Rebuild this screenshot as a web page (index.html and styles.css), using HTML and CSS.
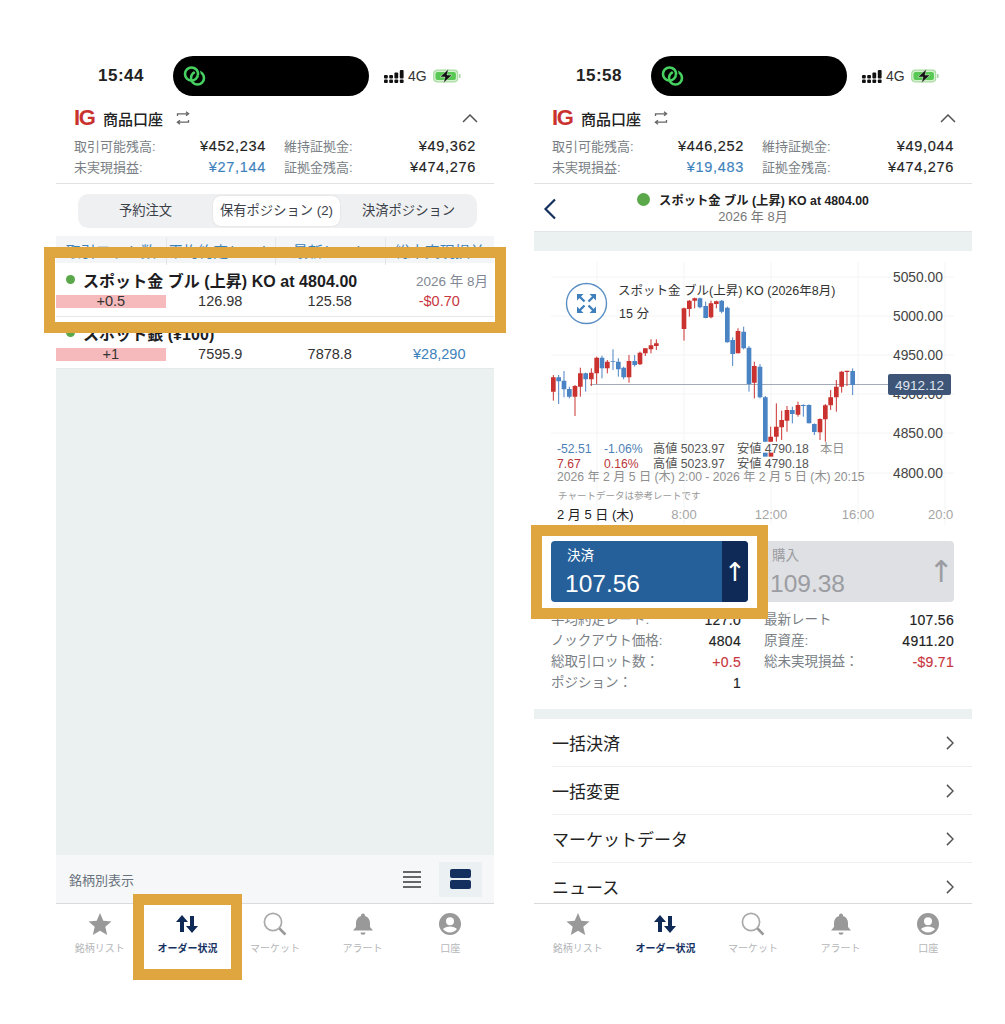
FILE: index.html
```html
<!DOCTYPE html>
<html lang="ja">
<head>
    <meta charset="UTF-8">
    <title>IG 商品口座</title>
    <link rel="stylesheet" href="styles.css">
</head>
<body>
    <!-- shared icons -->
    <svg class="defs">
        <symbol id="i-link" viewBox="0 0 26 20"><g fill="none" stroke="#46d160" stroke-width="2.600"><circle cx="9.500" cy="8" r="6.500"/><circle cx="15.500" cy="12" r="6.500"/><path d="M13.200 2.700A6.500 6.500 0 0 1 15.900 9.100" stroke="#000" stroke-width="5"/><path d="M12.800 2.400A6.500 6.500 0 0 1 15.900 9.100"/></g></symbol>
        <symbol id="i-signal" viewBox="0 0 20 13"><g fill="#111"><rect x="0" y="5" width="3.800" height="3.400" rx="1"/><rect x="0" y="9.600" width="3.800" height="3.400" rx="1"/><rect x="5.200" y="5" width="3.800" height="3.400" rx="1"/><rect x="5.200" y="9.600" width="3.800" height="3.400" rx="1"/><rect x="10.400" y="2.500" width="3.800" height="5.900" rx="1"/><rect x="10.400" y="9.600" width="3.800" height="3.400" rx="1"/><rect x="15.800" y="0" width="3.800" height="8.400" rx="1"/><rect x="15.800" y="9.600" width="3.800" height="3.400" rx="1"/></g></symbol>
        <symbol id="i-battery" viewBox="0 0 28 14"><rect x="0.700" y="1.200" width="24" height="11.600" rx="3.500" fill="#d5f0cf" stroke="#a7dca0" stroke-width="1.200"/><rect x="2.500" y="3" width="20.400" height="8" rx="2" fill="#58c754"/><rect x="26" y="5" width="1.600" height="4" rx="0.800" fill="#a9cfa5"/><path d="M15.500 0 7 8h5l-1.500 6L19 6h-5z" fill="#111" stroke="#e9f7e6" stroke-width="0.500"/></symbol>
        <symbol id="i-swap" viewBox="0 0 14 14"><g fill="none" stroke="#666" stroke-width="1.300"><path d="M1.500 5V2.800h11M10 .8l2.600 2-2.600 2"/><path d="M12.500 9v2.200h-11M4 13.200l-2.600-2 2.600-2"/></g></symbol>
        <symbol id="i-up" viewBox="0 0 16 9"><path d="M1 8l7-7 7 7" fill="none" stroke="#555" stroke-width="1.500"/></symbol>
        <symbol id="i-right" viewBox="0 0 9 16"><path d="M1 1l7 7-7 7" fill="none" stroke="#555" stroke-width="1.700"/></symbol>
        <symbol id="i-star" viewBox="0 0 24 24"><path d="M12 1l3.300 7.700 8.200.7-6.200 5.400 1.900 8.200L12 18.700 4.800 23l1.900-8.200L.5 9.400l8.200-.7z" fill="#999"/></symbol>
        <symbol id="i-orders" viewBox="0 0 24 24"><path d="M7 3l6 7H9v10H5V10H1zM15 4h4v10h4l-6 7-6-7h4z" fill="#0f2a57"/></symbol>
        <symbol id="i-search" viewBox="0 0 24 24"><circle cx="10" cy="10" r="8.600" fill="none" stroke="#aaa" stroke-width="1.700"/><path d="M16.400 16.400l6 6.200" stroke="#999" stroke-width="2.800"/></symbol>
        <symbol id="i-bell" viewBox="0 0 24 24"><path d="M12 1.500a2 2 0 0 1 2 2v.6c3.400 1 5 3.700 5 7v4l3 3.400H2l3-3.400v-4c0-3.300 1.600-6 5-7v-.6a2 2 0 0 1 2-2z" fill="#999"/><path d="M9.500 20.500h5a2.500 2.200 0 0 1-5 0z" fill="#999"/></symbol>
        <symbol id="i-user" viewBox="0 0 24 24"><path d="M12 1a11 11 0 1 0 0 22 11 11 0 0 0 0-22zm0 4.200a4 4 0 1 1 0 8 4 4 0 0 1 0-8zM12 20.500a8.800 8.800 0 0 1-7-3.500c1.500-1.800 4.200-2.600 7-2.600s5.500.8 7 2.600a8.800 8.800 0 0 1-7 3.500z" fill="#999"/></symbol>
    </svg>

    <div class="screens">
        <!-- left phone: positions list -->
        <section class="phone">
            <header class="status">
                <span class="clock">15:44</span>
                <div class="island"><svg class="island-icon"><use href="#i-link"/></svg></div>
                <div class="status-right">
                    <svg class="signal"><use href="#i-signal"/></svg>
                    <span class="net">4G</span>
                    <svg class="battery"><use href="#i-battery"/></svg>
                </div>
            </header>

            <div class="account">
                <div class="account-head">
                    <span class="logo">IG</span>
                    <span class="account-name">商品口座</span>
                    <svg class="swap"><use href="#i-swap"/></svg>
                    <svg class="collapse"><use href="#i-up"/></svg>
                </div>
                <div class="stats">
                    <div class="stat"><span>取引可能残高:</span><b>¥452,234</b></div>
                    <div class="stat"><span>維持証拠金:</span><b>¥49,362</b></div>
                    <div class="stat"><span>未実現損益:</span><b class="blue">¥27,144</b></div>
                    <div class="stat"><span>証拠金残高:</span><b>¥474,276</b></div>
                </div>
            </div>

            <main class="content">
                <div class="tabs">
                    <div class="tab">予約注文</div>
                    <div class="tab active">保有ポジション (2)</div>
                    <div class="tab">決済ポジション</div>
                </div>
                <div class="table-head">
                    <div>取引ロット数</div>
                    <div>平均約定レート</div>
                    <div>最新レート</div>
                    <div>総未実現損益</div>
                </div>
                <div class="pos first">
                    <div class="pos-title">
                        <i class="dot"></i>
                        <span class="pos-name">スポット金 ブル (上昇) KO at 4804.00</span>
                        <span class="pos-date">2026 年 8月</span>
                    </div>
                    <div class="pos-cells">
                        <div class="lot">+0.5</div>
                        <div>126.98</div>
                        <div>125.58</div>
                        <div class="red">-$0.70</div>
                    </div>
                </div>
                <div class="pos second">
                    <div class="pos-title">
                        <i class="dot"></i>
                        <span class="pos-name">スポット銀 (¥100)</span>
                    </div>
                    <div class="pos-cells">
                        <div class="lot">+1</div>
                        <div>7595.9</div>
                        <div>7878.8</div>
                        <div class="blue">¥28,290</div>
                    </div>
                </div>
                <div class="empty"></div>
                <div class="view-bar">
                    <span class="view-label">銘柄別表示</span>
                    <div class="view-list"><i></i><i></i><i></i><i></i></div>
                    <div class="view-card"><i></i><i></i></div>
                </div>
            </main>

            <nav class="tabbar">
                <div class="nav-item"><svg><use href="#i-star"/></svg><span>銘柄リスト</span></div>
                <div class="nav-item current"><svg><use href="#i-orders"/></svg><span>オーダー状況</span></div>
                <div class="nav-item"><svg><use href="#i-search"/></svg><span>マーケット</span></div>
                <div class="nav-item"><svg><use href="#i-bell"/></svg><span>アラート</span></div>
                <div class="nav-item"><svg><use href="#i-user"/></svg><span>口座</span></div>
            </nav>

            <div class="mark mark-row"></div>
            <div class="mark mark-tab"></div>
        </section>

        <!-- right phone: position detail -->
        <section class="phone">
            <header class="status">
                <span class="clock">15:58</span>
                <div class="island"><svg class="island-icon"><use href="#i-link"/></svg></div>
                <div class="status-right">
                    <svg class="signal"><use href="#i-signal"/></svg>
                    <span class="net">4G</span>
                    <svg class="battery"><use href="#i-battery"/></svg>
                </div>
            </header>

            <div class="account">
                <div class="account-head">
                    <span class="logo">IG</span>
                    <span class="account-name">商品口座</span>
                    <svg class="swap"><use href="#i-swap"/></svg>
                    <svg class="collapse"><use href="#i-up"/></svg>
                </div>
                <div class="stats">
                    <div class="stat"><span>取引可能残高:</span><b>¥446,252</b></div>
                    <div class="stat"><span>維持証拠金:</span><b>¥49,044</b></div>
                    <div class="stat"><span>未実現損益:</span><b class="blue">¥19,483</b></div>
                    <div class="stat"><span>証拠金残高:</span><b>¥474,276</b></div>
                </div>
            </div>

            <main class="content">
                <div class="detail-head">
                    <svg class="back" viewBox="0 0 14 22"><path d="M12 1.500 2.500 11l9.500 9.500" fill="none" stroke="#14305f" stroke-width="2.200"/></svg>
                    <div class="detail-title"><i class="dot big"></i><b>スポット金 ブル (上昇) KO at 4804.00</b></div>
                    <div class="detail-date">2026 年 8月</div>
                </div>
                <div class="strip"></div>

                <svg class="chart" viewBox="534 251 438 274">
                    <g class="grid">
                        <path d="M551 277H954M551 316H954M551 355H954M551 394H954M551 433H954M551 473H954"/>
                        <path d="M597 262V525M684 262V525M771 262V525M858 262V525M945 262V525"/>
                    </g>
                    <path class="price-line" d="M590 384.500H888"/>
                    <g transform="translate(545 260) scale(.33333)">
                        <path class="wick up" d="M25 345V422M90 375V468M106 323V410M139 325V378M155 290V372M187 300V340M252 285V368M285 275V315M301 265V288M318 238V280M334 238V270M417 143V242M433 120V170M449 113V145M498 122V175M514 122V145M579 205V280M628 305V415M677 500V545M694 430V545M710 452V540M726 438V515M759 425V470M825 475V540M841 432V545M857 390V450M874 360V455M890 333V398M906 333V378"/>
                        <path class="wick down" d="M41 345V432M57 333V412M73 380V415M122 338V395M171 287V355M204 268V330M220 295V350M236 320V358M269 285V320M465 113V145M482 125V175M530 120V160M547 140V248M563 232V318M596 200V268M612 258V395M645 312V415M661 408V545M742 440V490M775 433V470M792 433V490M808 490V525M923 325V405"/>
                        <path class="body up" d="M25 352V395M90 378V410M106 340V380M139 338V358M155 293V340M187 305V325M252 303V352M285 278V313M301 265V280M318 256V268M334 250V258M417 145V207M433 122V147M449 115V122M498 130V172M514 124V132M579 213V280M628 318V368M677 530V545M694 500V530M710 480V502M726 450V482M759 435V464M825 477V517M841 436V478M857 412V436M874 380V412M890 335V380M906 332V336"/>
                        <path class="body down" d="M41 352V364M57 362V388M73 387V410M122 340V358M171 293V325M204 303V305M220 305V328M236 323V352M269 303V315M465 115V142M482 138V174M530 122V155M547 143V247M563 240V282M596 215V265M612 263V372M645 320V412M661 412V545M742 450V462M775 435V438M792 435V490M808 492V516M923 333V375"/>
                        <path class="body up" d="M678 578V590"/>
                        <path class="body down" d="M661 578V590"/>
                    </g>

                    <circle class="expand-ring" cx="586.500" cy="303.500" r="20"/>
                    <path class="expand-heads" d="M577 294h6.500L577 300.500zM596 294h-6.500L596 300.500zM577 313h6.500L577 306.500zM596 313h-6.500L596 306.500z"/>
                    <path class="expand-tails" d="M579 296l5.500 5.500M594 296l-5.500 5.500M579 311l5.500-5.500M594 311l-5.500-5.500"/>
                    <text class="t-title" x="618" y="294.500">スポット金 ブル(上昇) KO (2026年8月)</text>
                    <text class="t-title" x="619" y="318">15 分</text>

                    <g class="t-axis">
                        <text x="893" y="282">5050.00</text>
                        <text x="893" y="321">5000.00</text>
                        <text x="893" y="360">4950.00</text>
                        <text x="893" y="399">4900.00</text>
                        <text x="893" y="438">4850.00</text>
                        <text x="893" y="478">4800.00</text>
                    </g>
                    <rect class="tag" x="888" y="374" width="63" height="21" rx="2"/>
                    <text class="t-tag" x="919.500" y="390" text-anchor="middle">4912.12</text>

                    <g class="t-info">
                        <text class="c-blue" x="557" y="453">-52.51</text>
                        <text class="c-blue" x="604" y="453">-1.06%</text>
                        <text x="653" y="453">高値 5023.97</text>
                        <text x="737" y="453">安値 4790.18</text>
                        <text class="c-soft" x="820" y="453">本日</text>
                        <text class="c-red" x="557" y="468">7.67</text>
                        <text class="c-red" x="604" y="468">0.16%</text>
                        <text x="653" y="468">高値 5023.97</text>
                        <text x="737" y="468">安値 4790.18</text>
                        <text class="c-soft" x="557" y="481">2026 年 2 月 5 日 (木) 2:00 - 2026 年 2 月 5 日 (木) 20:15</text>
                    </g>
                    <text class="t-note" x="558" y="499">チャートデータは参考レートです</text>
                    <text class="t-day" x="557" y="519">2 月 5 日 (木)</text>
                    <g class="t-time" text-anchor="middle">
                        <text x="684" y="519">8:00</text>
                        <text x="771" y="519">12:00</text>
                        <text x="858" y="519">16:00</text>
                    </g>
                    <text class="t-time" x="928" y="519">20:0</text>
                </svg>

                <div class="deal">
                    <div class="deal-btn sell">
                        <div class="deal-main"><span>決済</span><b>107.56</b></div>
                        <div class="deal-side">↑</div>
                    </div>
                    <div class="deal-btn buy">
                        <div class="deal-main"><span>購入</span><b>109.38</b></div>
                        <div class="deal-side">↑</div>
                    </div>
                </div>

                <div class="info">
                    <div class="stat"><span>平均約定レート:</span><b>127.0</b></div>
                    <div class="stat"><span>最新レート</span><b>107.56</b></div>
                    <div class="stat"><span>ノックアウト価格:</span><b>4804</b></div>
                    <div class="stat"><span>原資産:</span><b>4911.20</b></div>
                    <div class="stat"><span>総取引ロット数：</span><b class="red">+0.5</b></div>
                    <div class="stat"><span>総未実現損益：</span><b class="red">-$9.71</b></div>
                    <div class="stat"><span>ポジション：</span><b>1</b></div>
                </div>

                <div class="strip thin"></div>

                <ul class="menu">
                    <li>一括決済<svg><use href="#i-right"/></svg></li>
                    <li>一括変更<svg><use href="#i-right"/></svg></li>
                    <li>マーケットデータ<svg><use href="#i-right"/></svg></li>
                    <li>ニュース<svg><use href="#i-right"/></svg></li>
                </ul>
            </main>

            <nav class="tabbar">
                <div class="nav-item"><svg><use href="#i-star"/></svg><span>銘柄リスト</span></div>
                <div class="nav-item current"><svg><use href="#i-orders"/></svg><span>オーダー状況</span></div>
                <div class="nav-item"><svg><use href="#i-search"/></svg><span>マーケット</span></div>
                <div class="nav-item"><svg><use href="#i-bell"/></svg><span>アラート</span></div>
                <div class="nav-item"><svg><use href="#i-user"/></svg><span>口座</span></div>
            </nav>

            <div class="mark mark-deal"></div>
        </section>
    </div>
</body>
</html>
```

FILE: styles.css
```css
* {
    margin: 0;
    padding: 0;
    box-sizing: border-box;
}

body {
    background: #fff;
    color: #1d1d1f;
    font-family: "Liberation Sans", "Noto Sans CJK JP", sans-serif;
}

.defs {
    display: none;
}

.screens {
    display: flex;
    gap: 40px;
    min-height: 1024px;
    padding: 56px 0 0 56px;
}

.phone {
    position: relative;
    display: flex;
    flex-direction: column;
    width: 438px;
    height: 904px;
}

/* status bar */
.status {
    display: flex;
    align-items: center;
    height: 40px;
    flex: none;
}

.clock {
    width: 117px;
    padding-left: 42px;
    font-size: 17px;
    font-weight: 700;
    letter-spacing: 0.5px;
    color: #222;
}

.island {
    display: flex;
    align-items: center;
    width: 196px;
    height: 40px;
    padding-left: 9px;
    background: #000;
    border-radius: 20px;
}

.island-icon {
    width: 26px;
    height: 20px;
}

.status-right {
    display: flex;
    align-items: center;
    margin-left: 15px;
}

.signal {
    width: 20px;
    height: 13px;
}

.net {
    margin: 0 6px 0 4px;
    font-size: 14px;
    color: #333;
}

.battery {
    width: 28px;
    height: 14px;
}

/* account summary */
.account {
    flex: none;
    height: 88px;
    padding-top: 10px;
    border-bottom: 1px solid #dfe1e3;
}

.account-head {
    display: flex;
    align-items: center;
    height: 24px;
    padding: 0 16px 0 18px;
}

.logo {
    width: 29px;
    font-size: 22px;
    font-weight: 700;
    letter-spacing: -1.4px;
    color: #c9322f;
}

.account-name {
    font-size: 15px;
    font-weight: 500;
    color: #222;
}

.swap {
    width: 14px;
    height: 14px;
    margin-left: 13px;
}

.collapse {
    width: 16px;
    height: 9px;
    margin-left: auto;
}

.stats {
    display: grid;
    grid-template-columns: 192px 192px;
    grid-auto-rows: 21px;
    column-gap: 18px;
    padding: 6px 18px 0;
}

.stat {
    display: flex;
    justify-content: space-between;
    align-items: center;
    height: 21px;
    font-size: 13px;
    line-height: 1;
    color: #7a7f86;
}

.stat b {
    font-size: 14.5px;
    font-weight: 400;
    letter-spacing: 0.7px;
    color: #222;
    -webkit-text-stroke: 0.15px currentColor;
}

.blue,
.stat b.blue {
    color: #3e82bd;
}

.red,
.stat b.red {
    color: #c9363f;
}

/* content area */
.content {
    flex: 1;
    display: flex;
    flex-direction: column;
    min-height: 0;
    overflow: hidden;
}

.tabs {
    display: grid;
    grid-template-columns: 135px 127px 137px;
    align-items: center;
    flex: none;
    width: 399px;
    height: 34px;
    margin: 10px 0 8px 22px;
    padding: 2px 0;
    background: #eef0f2;
    border-radius: 10px;
}

.tab {
    font-size: 13.3px;
    line-height: 30px;
    text-align: center;
    color: #3c4048;
}

.tab.active {
    height: 30px;
    background: #fff;
    border-radius: 8px;
    box-shadow: 0 0 2px rgba(0, 0, 0, 0.12);
}

.table-head {
    display: grid;
    grid-template-columns: repeat(4, 1fr);
    flex: none;
    height: 27px;
    padding-top: 2px;
    background: #f3f5f6;
    font-size: 15px;
    line-height: 27px;
    text-align: center;
    color: #3e82bd;
}

.table-head div + div {
    border-left: 1px solid #e3e6e8;
}

.pos {
    flex: none;
    border-bottom: 1px solid #e6e9eb;
}

.pos.first {
    height: 54px;
    padding-top: 4px;
}

.pos.second {
    height: 52px;
}

.pos-title {
    display: flex;
    align-items: center;
    height: 25px;
    padding: 0 6px 0 10px;
}

.pos.second .pos-title {
    height: 31px;
}

.dot {
    flex: none;
    width: 9px;
    height: 9px;
    background: #5aa84a;
    border-radius: 50%;
}

.pos-name {
    margin-left: 8px;
    font-size: 16px;
    font-weight: 700;
    letter-spacing: 0.05px;
    color: #1d1d1f;
}

.pos-date {
    margin-left: auto;
    font-size: 13.5px;
    color: #7f8894;
}

.pos-cells {
    display: grid;
    grid-template-columns: repeat(4, 1fr);
    font-size: 14.5px;
    line-height: 13px;
    text-align: center;
    color: #333;
}

.pos.first .pos-cells {
    margin-top: 3px;
}

.lot {
    background: #f6babc;
}

.empty {
    flex: 1;
    background: #ebf0f0;
}

.view-bar {
    display: flex;
    align-items: center;
    flex: none;
    height: 48px;
    padding: 0 12px 0 13px;
    background: #f5f7f8;
}

.view-label {
    font-size: 13px;
    color: #68717c;
}

.view-list {
    display: flex;
    flex-direction: column;
    gap: 3px;
    width: 18px;
    margin-left: auto;
}

.view-list i {
    height: 2px;
    background: #666;
}

.view-card {
    display: flex;
    flex-direction: column;
    justify-content: center;
    gap: 2px;
    width: 43px;
    height: 35px;
    margin-left: 18px;
    padding: 0 11px;
    background: #ebf0f2;
}

.view-card i {
    height: 9px;
    background: #14305f;
    border-radius: 2px;
}

/* bottom tabs */
.tabbar {
    display: grid;
    grid-template-columns: repeat(5, 1fr);
    flex: none;
    height: 57px;
    padding-top: 8px;
    background: #fff;
    border-top: 1px solid #d8dadc;
}

.nav-item {
    display: flex;
    flex-direction: column;
    align-items: center;
    font-size: 10px;
    color: #b4b6b9;
}

.nav-item svg {
    width: 24px;
    height: 24px;
    margin-bottom: 4px;
}

.nav-item.current {
    font-weight: 700;
    color: #14305f;
}

/* detail screen */
.detail-head {
    position: relative;
    flex: none;
    height: 48px;
    padding-top: 7px;
    border-bottom: 1px solid #e3e6e8;
    text-align: center;
}

.back {
    position: absolute;
    left: 9px;
    top: 14px;
    width: 14px;
    height: 22px;
}

.detail-title {
    display: flex;
    justify-content: center;
    align-items: center;
    gap: 9px;
    height: 17px;
    font-size: 12.3px;
    color: #222;
}

.detail-title b {
    font-weight: 700;
}

.dot.big {
    width: 13px;
    height: 13px;
}

.detail-date {
    padding-top: 1px;
    font-size: 13px;
    line-height: 16px;
    color: #777;
}

.strip {
    flex: none;
    height: 19px;
    background: #ebf0f0;
}

.strip.thin {
    height: 10px;
}

.chart {
    display: block;
    flex: none;
    width: 438px;
    height: 274px;
}

.grid path {
    fill: none;
    stroke: #f3f4f5;
    stroke-width: 1;
}

.price-line {
    stroke: #a3abb8;
    stroke-width: 1;
}

.wick {
    fill: none;
    stroke-width: 3;
}

.body {
    fill: none;
    stroke-width: 14;
}

.up {
    stroke: #c9322f;
}

.down {
    stroke: #4a84c4;
}

.expand-ring {
    fill: #fff;
    stroke: #5a8fc4;
    stroke-width: 1.4;
}

.expand-heads {
    fill: #3f7fbb;
}

.expand-tails {
    fill: none;
    stroke: #3f7fbb;
    stroke-width: 2.4;
}

.chart text {
    font-family: "Liberation Sans", "Noto Sans CJK JP", sans-serif;
}

.t-title {
    font-size: 12.5px;
    fill: #333;
}

.t-axis text {
    font-size: 13.8px;
    fill: #444;
}

.tag {
    fill: #3f5578;
}

.t-tag {
    font-size: 13.5px;
    fill: #dfe5ee;
}

.t-info text {
    font-size: 12.2px;
    fill: #555;
}

.t-info .c-blue {
    fill: #4e7fb5;
}

.t-info .c-red {
    fill: #b9373a;
}

.t-info .c-soft {
    fill: #909090;
}

.t-note {
    font-size: 9.5px;
    fill: #999;
}

.t-day {
    font-size: 13px;
    fill: #222;
}

.t-time,
.t-time text {
    font-size: 13px;
    fill: #a5a5a5;
}

.deal {
    display: flex;
    justify-content: space-between;
    flex: none;
    height: 61px;
    margin: 16px 18px 0 17px;
}

.deal-btn {
    display: flex;
    height: 61px;
    border-radius: 4px;
    overflow: hidden;
}

.sell {
    width: 197px;
    background: #26609a;
    color: #fff;
}

.buy {
    width: 189px;
    background: #dfe0e3;
    color: #9b9da2;
}

.deal-main {
    flex: 1;
    display: flex;
    flex-direction: column;
    padding: 6px 0 0 14px;
}

.buy .deal-main {
    padding-left: 5px;
}

.deal-main span {
    padding-left: 2px;
    font-size: 13.5px;
    line-height: 18px;
}

.deal-main b {
    font-size: 24.5px;
    font-weight: 400;
    line-height: 38px;
}

.deal-side {
    display: flex;
    justify-content: center;
    align-items: center;
    width: 26px;
    font-size: 26px;
    font-family: "DejaVu Sans", sans-serif;
}

.sell .deal-side {
    background: #0f2a57;
}

.buy .deal-side {
    font-size: 30px;
}

.info {
    display: grid;
    grid-template-columns: 190px 190px;
    grid-auto-rows: 21px;
    column-gap: 23px;
    flex: none;
    height: 107px;
    padding: 7px 18px 0 17px;
}

.info .stat {
    font-size: 13.5px;
}

.info .stat b {
    font-size: 14px;
    letter-spacing: 0.3px;
}

.menu {
    list-style: none;
    margin-left: 18px;
}

.menu li {
    display: flex;
    justify-content: space-between;
    align-items: center;
    height: 48px;
    padding-right: 18px;
    border-bottom: 1px solid #eceeef;
    font-size: 17px;
    color: #222;
}

.menu svg {
    width: 8px;
    height: 14px;
}

/* orange highlight frames */
.mark {
    position: absolute;
    border: 11px solid #dfa53e;
    pointer-events: none;
}

.mark-row {
    left: -12px;
    top: 191px;
    width: 462px;
    height: 86px;
}

.mark-tab {
    left: 77px;
    top: 838px;
    width: 109px;
    height: 86px;
}

.mark-deal {
    left: -3px;
    top: 469px;
    width: 237px;
    height: 94px;
}
```
